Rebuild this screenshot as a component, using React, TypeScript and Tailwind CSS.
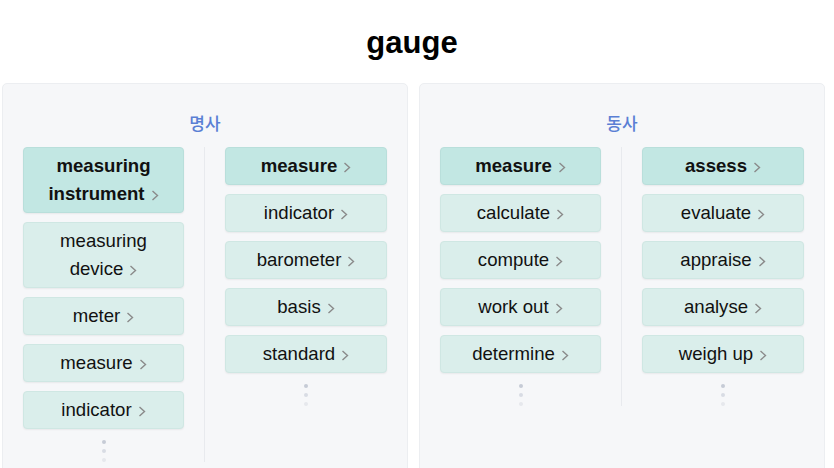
const SECTIONS = [
  {
    title: '명사',
    columns: [
      ['measuring instrument', 'measuring device', 'meter', 'measure', 'indicator'],
      ['measure', 'indicator', 'barometer', 'basis', 'standard'],
    ],
  },
  {
    title: '동사',
    columns: [
      ['measure', 'calculate', 'compute', 'work out', 'determine'],
      ['assess', 'evaluate', 'appraise', 'analyse', 'weigh up'],
    ],
  },
]

function Chevron() {
  return (
    <svg width="8" height="11" viewBox="0 0 8 11" className="ml-[6px] inline-block align-[-1px]">
      <path d="M1.5 1 L6.5 5.5 L1.5 10" fill="none" stroke="#8a8a8a" strokeWidth="1.4" />
    </svg>
  )
}

function WordCard({ word, head }: { word: string; head?: boolean }) {
  const words = word.split(' ')
  const last = words.pop()
  const lead = words.join(' ')
  return (
    <div
      className={`rounded-[4px] border px-2 py-[4px] text-center text-[18.6px] leading-[28px] text-[#111] shadow-[0_1px_2px_rgba(0,0,0,0.06)] ${
        head ? 'border-[#b9dfdb] bg-[#c2e7e3] font-bold' : 'border-[#cfe7e3] bg-[#daeeeb]'
      }`}
    >
      {lead && <>{lead} </>}
      <span className="whitespace-nowrap">
        {last}
        <Chevron />
      </span>
    </div>
  )
}

function Dots() {
  return (
    <div className="mt-[11px] flex flex-col items-center gap-[5px]">
      <span className="h-1 w-1 rounded-full bg-[#c6cbd6]" />
      <span className="h-1 w-1 rounded-full bg-[#d8dce4]" />
      <span className="h-1 w-1 rounded-full bg-[#e6e8ed]" />
    </div>
  )
}

export default function App() {
  return (
    <div className="h-[468px] overflow-hidden bg-white font-['Liberation_Sans','Noto_Sans_CJK_KR',sans-serif]">
      <h1 className="pt-[25px] pr-[10px] pb-[22px] text-center text-[31px] font-bold leading-[36px] text-black">gauge</h1>
      <div className="flex gap-[11px] pl-[2px] pr-[9px]">
        {SECTIONS.map((s) => (
          <div key={s.title} className="flex-1 rounded-[5px] border border-[#eceef1] bg-[#f6f7f9] pt-[27px] pb-8">
            <div className="mb-[12px] text-center font-['Noto_Sans_CJK_KR',sans-serif] text-[17px] font-medium leading-[24px] text-[#5a7fd4]">
              {s.title}
            </div>
            <div className="grid grid-cols-2">
              {s.columns.map((col, ci) => (
                <div key={ci} className={`px-5 ${ci === 0 ? 'border-r border-[#e8eaee]' : ''}`}>
                  <div className="flex flex-col gap-[9px]">
                    {col.map((w, i) => (
                      <WordCard key={w + i} word={w} head={i === 0} />
                    ))}
                  </div>
                  <Dots />
                </div>
              ))}
            </div>
          </div>
        ))}
      </div>
    </div>
  )
}
